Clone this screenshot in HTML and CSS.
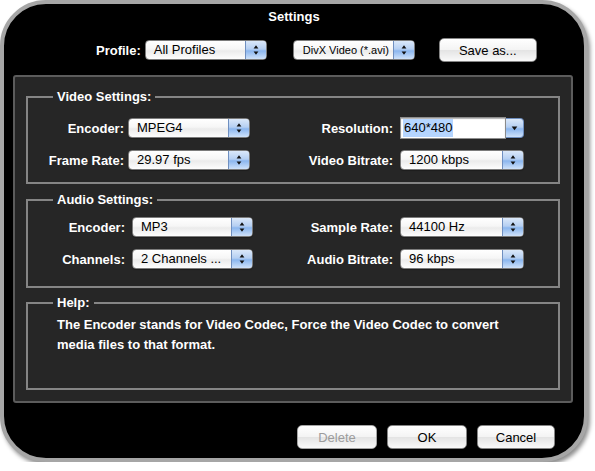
FILE: index.html
```html
<!DOCTYPE html>
<html>
<head>
<meta charset="utf-8">
<title>Settings</title>
<link rel="stylesheet" href="styles.css">
</head>
<body>
<div class="window">
  <div class="title">Settings</div>

  <div class="profile-row">
    <span class="lbl">Profile:</span>
    <div class="popup w-profile">
      <span class="val">All Profiles</span>
      <span class="arrows"><svg width="21" height="18" viewBox="0 0 21 18"><path d="M8 7.5 L10.5 4 L13 7.5 Z M8 10.5 L10.5 14 L13 10.5 Z" fill="#111"/></svg></span>
    </div>
    <div class="popup w-format small">
      <span class="val">DivX Video (*.avi)</span>
      <span class="arrows"><svg width="21" height="18" viewBox="0 0 21 18"><path d="M8 7.5 L10.5 4 L13 7.5 Z M8 10.5 L10.5 14 L13 10.5 Z" fill="#111"/></svg></span>
    </div>
    <button class="btn save">Save as...</button>
  </div>

  <div class="panel">
    <fieldset class="group video">
      <legend>Video Settings:</legend>
      <div class="grid grid-video">
        <label class="lbl">Encoder:</label>
        <div class="popup"><span class="val">MPEG4</span><span class="arrows"><svg width="21" height="18" viewBox="0 0 21 18"><path d="M8 7.5 L10.5 4 L13 7.5 Z M8 10.5 L10.5 14 L13 10.5 Z" fill="#111"/></svg></span></div>
        <label class="lbl">Resolution:</label>
        <div class="combo">
          <span class="field"><span class="sel">640*480</span></span>
          <span class="arrows"><svg width="18" height="18" viewBox="0 0 18 18"><path d="M6 7.5 L9 11.5 L12 7.5 Z" fill="#111"/></svg></span>
        </div>

        <label class="lbl">Frame Rate:</label>
        <div class="popup"><span class="val">29.97 fps</span><span class="arrows"><svg width="21" height="18" viewBox="0 0 21 18"><path d="M8 7.5 L10.5 4 L13 7.5 Z M8 10.5 L10.5 14 L13 10.5 Z" fill="#111"/></svg></span></div>
        <label class="lbl">Video Bitrate:</label>
        <div class="popup"><span class="val">1200 kbps</span><span class="arrows"><svg width="21" height="18" viewBox="0 0 21 18"><path d="M8 7.5 L10.5 4 L13 7.5 Z M8 10.5 L10.5 14 L13 10.5 Z" fill="#111"/></svg></span></div>
      </div>
    </fieldset>

    <fieldset class="group audio">
      <legend>Audio Settings:</legend>
      <div class="grid grid-audio">
        <label class="lbl">Encoder:</label>
        <div class="popup"><span class="val">MP3</span><span class="arrows"><svg width="21" height="18" viewBox="0 0 21 18"><path d="M8 7.5 L10.5 4 L13 7.5 Z M8 10.5 L10.5 14 L13 10.5 Z" fill="#111"/></svg></span></div>
        <label class="lbl">Sample Rate:</label>
        <div class="popup"><span class="val">44100 Hz</span><span class="arrows"><svg width="21" height="18" viewBox="0 0 21 18"><path d="M8 7.5 L10.5 4 L13 7.5 Z M8 10.5 L10.5 14 L13 10.5 Z" fill="#111"/></svg></span></div>

        <label class="lbl">Channels:</label>
        <div class="popup"><span class="val">2 Channels ...</span><span class="arrows"><svg width="21" height="18" viewBox="0 0 21 18"><path d="M8 7.5 L10.5 4 L13 7.5 Z M8 10.5 L10.5 14 L13 10.5 Z" fill="#111"/></svg></span></div>
        <label class="lbl">Audio Bitrate:</label>
        <div class="popup"><span class="val">96 kbps</span><span class="arrows"><svg width="21" height="18" viewBox="0 0 21 18"><path d="M8 7.5 L10.5 4 L13 7.5 Z M8 10.5 L10.5 14 L13 10.5 Z" fill="#111"/></svg></span></div>
      </div>
    </fieldset>

    <fieldset class="group help">
      <legend>Help:</legend>
      <p class="help-text">The Encoder stands for Video Codec, Force the Video Codec to convert<br>media files to that format.</p>
    </fieldset>
  </div>

  <div class="actions">
    <button class="btn act disabled">Delete</button>
    <button class="btn act">OK</button>
    <button class="btn act cancel">Cancel</button>
  </div>
</div>
</body>
</html>
```

FILE: styles.css
```css
* {
  box-sizing: border-box;
}

html, body {
  margin: 0;
  padding: 0;
  background: #ffffff;
}

body {
  font-family: "Liberation Sans", Arial, sans-serif;
  font-size: 13px;
}

.window {
  width: 588px;
  height: 462px;
  background: #000;
  border: 4px solid #a6a6a6;
  border-radius: 46px;
  box-shadow: 2px 3px 4px rgba(0, 0, 0, 0.45);
  display: flex;
  flex-direction: column;
}

.title {
  padding-top: 5px;
  line-height: 16px;
  height: 21px;
  text-align: center;
  color: #fff;
  font-weight: bold;
  font-size: 13px;
}

.lbl {
  color: #fff;
  font-weight: bold;
  font-size: 13px;
  white-space: nowrap;
}

.profile-row {
  margin-top: 13px;
  height: 24px;
  display: flex;
  align-items: center;
  padding-left: 92px;
}

.profile-row .lbl {
  margin-right: 4px;
}

/* Aqua popup button */
.popup {
  display: flex;
  height: 20px;
  border: 1px solid #7c7c7c;
  border-radius: 4px;
  overflow: hidden;
  background: linear-gradient(#ffffff 0%, #f6f6f6 45%, #ebebeb 55%, #fdfdfd 100%);
  color: #000;
  font-size: 13px;
  box-shadow: 0 1px 1px rgba(0, 0, 0, 0.25);
}

.popup .val {
  flex: 1;
  padding-left: 8px;
  line-height: 18px;
  white-space: nowrap;
  overflow: hidden;
}

.popup .arrows {
  width: 21px;
  flex: none;
  border-left: 1px solid #6f8fc0;
  background: linear-gradient(#dbe8f9 0%, #b5cff2 45%, #8bb6ee 55%, #cfe2fa 100%);
  display: flex;
  align-items: center;
  justify-content: center;
}

.popup.small {
  font-size: 11px;
}

.popup.small .val {
  padding-left: 9px;
}

.w-profile {
  width: 122px;
}

.w-format {
  width: 122px;
  margin-left: 26px;
}

/* Aqua push button */
.btn {
  height: 24px;
  padding: 0;
  border: 1px solid #858585;
  border-radius: 5px;
  background: linear-gradient(#ffffff 0%, #f4f4f4 48%, #e4e4e4 52%, #f9f9f9 100%);
  color: #000;
  font-family: "Liberation Sans", Arial, sans-serif;
  font-size: 13px;
  box-shadow: 0 1px 1px rgba(0, 0, 0, 0.35);
}

.btn.save {
  width: 98px;
  margin-left: 24px;
}

.panel {
  margin: 13px 11px 0 9px;
  height: 328px;
  background: #262626;
  border: 2px solid #5c5c5c;
  border-radius: 3px;
  padding: 12px 11px 11px 11px;
  display: flex;
  flex-direction: column;
}

.group {
  margin: 0;
  padding: 0;
  border: 2px solid #858585;
  min-width: 0;
}

.group legend {
  margin-left: 25px;
  padding: 0 4px;
  line-height: 16px;
  color: #fff;
  font-weight: bold;
  font-size: 13px;
}

.grid {
  display: grid;
  grid-auto-rows: 22px;
  row-gap: 10px;
  align-items: center;
}

.grid .lbl {
  text-align: right;
}

.grid-video {
  grid-template-columns: 100px 122px 150px 124px;
  padding: 12px 0 11px 0;
}

.grid-video .lbl:nth-child(4n+1) {
  margin-right: 4px;
}

.grid-video .lbl:nth-child(4n+3),
.grid-audio .lbl {
  margin-right: 7px;
}

.grid-audio {
  grid-template-columns: 104px 121px 147px 124px;
  padding: 8px 0 16px 0;
}

.audio {
  margin-top: 8px;
}

.help {
  margin-top: 7px;
  flex: 1;
}

.help-text {
  margin: 0;
  padding: 4px 0 0 29px;
  line-height: 20px;
  color: #fff;
  font-weight: bold;
  font-size: 13px;
}

/* Aqua combo box */
.combo {
  display: flex;
  align-items: center;
  height: 22px;
}

.combo .field {
  flex: 1;
  height: 22px;
  background: #fff;
  border: 1px solid #8e8e8e;
  box-shadow: inset 0 1px 1px rgba(0, 0, 0, 0.3);
  padding: 1px 0 0 2px;
  line-height: 18px;
  color: #000;
  font-size: 13px;
}

.combo .sel {
  display: inline-block;
  background: #b5d5ff;
  padding: 0 1px;
  height: 18px;
}

.combo .arrows {
  width: 18px;
  height: 20px;
  flex: none;
  border: 1px solid #6f8fc0;
  border-left: none;
  border-radius: 0 4px 4px 0;
  background: linear-gradient(#dbe8f9 0%, #b5cff2 45%, #8bb6ee 55%, #cfe2fa 100%);
  display: flex;
  align-items: center;
  justify-content: center;
  box-shadow: 0 1px 1px rgba(0, 0, 0, 0.25);
}

.actions {
  margin-top: 22px;
  display: flex;
  justify-content: flex-end;
  gap: 10px;
  padding-right: 29px;
}

.btn.act {
  width: 80px;
}

.btn.cancel {
  width: 78px;
}

.btn.disabled {
  color: #9c9c9c;
  border-color: #a5a5a5;
}
```
